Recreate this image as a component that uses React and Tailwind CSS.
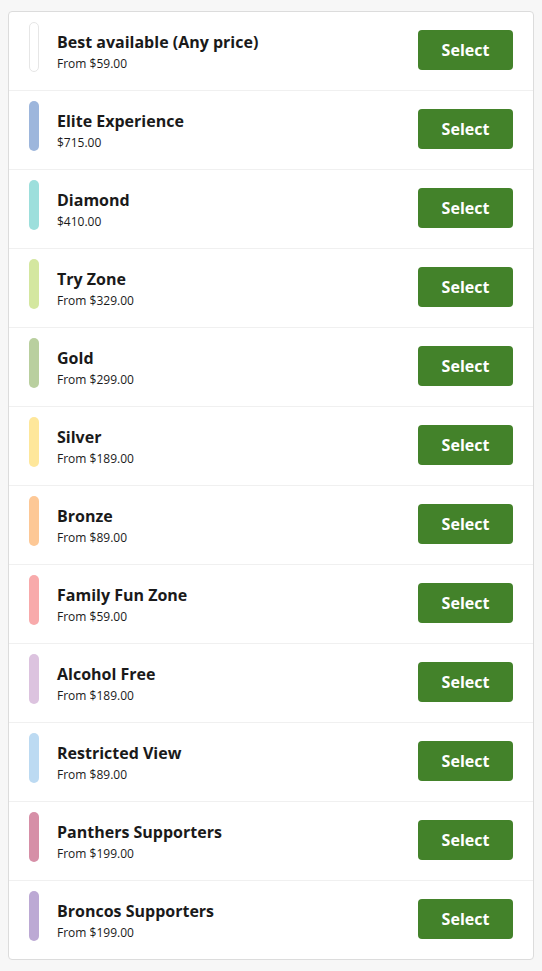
const tiers = [
  { name: 'Best available (Any price)', price: 'From $59.00', color: 'bg-white border border-[#e6e6e6]' },
  { name: 'Elite Experience', price: '$715.00', color: 'bg-[#9db6dc]' },
  { name: 'Diamond', price: '$410.00', color: 'bg-[#9ddfdc]' },
  { name: 'Try Zone', price: 'From $329.00', color: 'bg-[#d4e7a0]' },
  { name: 'Gold', price: 'From $299.00', color: 'bg-[#b9cf9f]' },
  { name: 'Silver', price: 'From $189.00', color: 'bg-[#fee79b]' },
  { name: 'Bronze', price: 'From $89.00', color: 'bg-[#fdc896]' },
  { name: 'Family Fun Zone', price: 'From $59.00', color: 'bg-[#f8aaab]' },
  { name: 'Alcohol Free', price: 'From $189.00', color: 'bg-[#dcc3df]' },
  { name: 'Restricted View', price: 'From $89.00', color: 'bg-[#bcdaf2]' },
  { name: 'Panthers Supporters', price: 'From $199.00', color: 'bg-[#d68fa7]' },
  { name: 'Broncos Supporters', price: 'From $199.00', color: 'bg-[#bca9d4]' },
];

export default function App() {
  return (
    <div className="min-h-[971px] bg-[#f7f7f7] pt-[11px] font-['Open_Sans',sans-serif]">
      <div className="mx-2 bg-white border border-[#dcdcdc] rounded-[4px]">
        {tiers.map((t, i) => (
          <div
            key={t.name}
            className={`flex items-start h-[78px] px-5 pt-[10px] ${i < tiers.length - 1 ? 'border-b border-[#f0f0f0] h-[79px]' : ''}`}
          >
            <div className={`w-[10px] h-[50px] rounded-[5px] shrink-0 ${t.color}`} />
            <div className="ml-[18px] mt-[9px]">
              <div className="text-[16px] leading-[22px] font-bold text-[#1a1a1a]">{t.name}</div>
              <div className="mt-[2px] text-[12px] leading-[18px] text-[#1a1a1a]">{t.price}</div>
            </div>
            <button className="ml-auto mt-[8px] w-[95px] h-[40px] rounded-[4px] bg-[#43822a] text-white text-[16px] font-bold">
              Select
            </button>
          </div>
        ))}
      </div>
    </div>
  );
}
